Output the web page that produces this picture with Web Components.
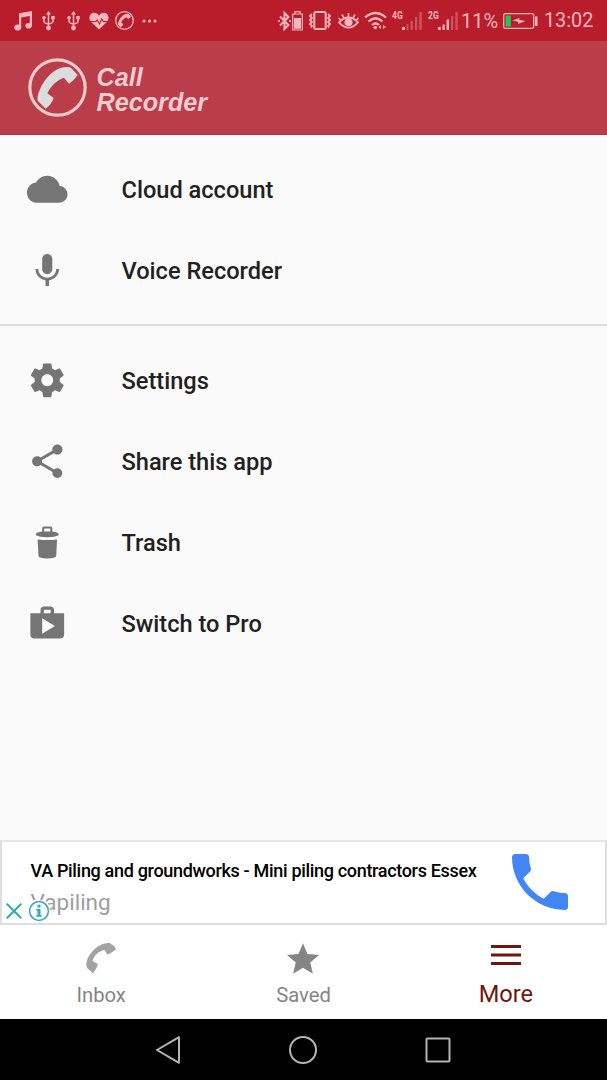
<!DOCTYPE html>
<html lang="en">
<head>
<meta charset="utf-8">
<meta name="viewport" content="width=device-width, initial-scale=1">
<title>Call Recorder</title>
<style>
  body {
    margin: 0;
    font-family: Roboto, "Liberation Sans", sans-serif;
    background: #fafafa;
  }
</style>
</head>
<body>
<call-recorder-app></call-recorder-app>

<script>
/* Icons: [viewBox, width, height, markup] */
const HANDSET = "M137 206 L113 182 C108 154 150 76 205 81 Q212 82 214 85 L233 105 Q222 122 207 131 L192 113 C172 119 152 138 142 160 L161 174 Q154 194 137 206Z";

const ICONS = {
  /* status bar, left */
  music: ["0 0 18 20", 18, 20, `<path d="M5 2.2 18 0v15.2h-2.200V5L7.200 6.500v10H5z"/><ellipse cx="3.7" cy="16.4" rx="3.5" ry="3"/><ellipse cx="14.6" cy="14.8" rx="3.2" ry="2.8"/>`],
  usb: ["0 0 13 20", 13, 20, `<path d="M6.5 2v15M2 7.500v2.800q0 1.400 1.400 1.800l3.100 1.200 3.100-1.200q1.400-.4 1.400-1.800V7" fill="none" stroke="currentColor" stroke-width="1.500"/><path d="M6.500 0 9 3.600H4z"/><circle cx="2" cy="6.800" r="1.800"/><path d="M9.300 5h3.400v3.300H9.300z"/><circle cx="6.500" cy="17" r="2.400"/>`],
  heart: ["0 0 20 18", 20, 18, `<path d="M10 17.500 1.700 9.500C-.8 6.500.5 1 5 .8c2.300 0 4 1.200 5 2.900C11 2 12.700.8 15 .8c4.500.2 5.800 5.700 3.300 8.700z"/><path d="M0 9.500h7l1.200-1.600 2.300 4 2.300-5 1.500 2.600H20" fill="none" stroke="#b91d2c" stroke-width="1.100"/>`],
  callCircle: ["84 54 177 177", 19, 19, `<circle cx="172.500" cy="142.500" r="82" fill="none" stroke="currentColor" stroke-width="12"/><path d="${HANDSET}"/>`],
  dots: ["0 0 15 4", 15, 4, `<circle cx="2" cy="2" r="1.500"/><circle cx="7.500" cy="2" r="1.500"/><circle cx="13" cy="2" r="1.500"/>`],

  /* status bar, right */
  bluetooth: ["0 0 13 20", 13, 20, `<path d="M2 5.500 10.500 14 6.500 18V2l4 4L2 14.500" fill="none" stroke="currentColor" stroke-width="2"/><circle cx="1" cy="10" r="1.100"/><circle cx="12" cy="10" r="1.100"/>`],
  deviceBattery: ["0 0 11 20", 11, 20, `<path d="M.7 3h9.600v16H.7zM3 3V.7h5V3" fill="none" stroke="currentColor" stroke-width="1.200"/><path d="M2 7h7v10.800H2z"/>`],
  vibrate: ["0 0 24 19", 24, 19, `<rect x="6.300" y="1" width="11.400" height="17" rx="1.500" fill="none" stroke="currentColor" stroke-width="2"/><path d="M4 3 2 5l2 2-2 2 2 2-2 2 2 2-1 1.500M20 3l2 2-2 2 2 2-2 2 2 2-2 2 1 1.500" fill="none" stroke="currentColor" stroke-width="1.800"/>`],
  eye: ["0 0 21 17", 21, 17, `<path d="M1 10.300q9.500-9.500 19 0-9.500 10.500-19 0z" fill="none" stroke="currentColor" stroke-width="1.800"/><circle cx="10.500" cy="10.300" r="4"/><path d="M10.500 1v4M4 2.500l2 3.500M17 2.500l-2 3.500M.5 6l2 2M20.500 6l-2 2" stroke="currentColor" stroke-width="1.600"/>`],
  wifi: ["0 0 24 20", 24, 20, `<g fill="none" stroke="currentColor" stroke-width="2.200"><path d="M1 6.500q10.500-9 21 0M4.500 10.500q7-6.500 14 0M8 14q3.500-3 7 0"/></g><circle cx="11.300" cy="16.500" r="1.800"/><path d="m14.500 16 2.500-2v4zM19 14v4l3-2z"/>`],
  signalOne: ["0 0 20 18", 20, 18, `<path d="M0 15h3v3H0z"/><g opacity=".35"><path d="M4.500 12h2v6h-2zM8.600 9h2.200v9H8.600zM13 5h2.200v13H13zM17.300 0h2.400v18h-2.400z"/></g>`],
  signalThree: ["0 0 20 18", 20, 18, `<path d="M0 15h2.700v3H0zM4.500 12.500h2.200V18H4.500zM8.600 7.500h2.400V18H8.600z"/><g opacity=".35"><path d="M13 4h2.200v14H13zM17.300 0h2.400v18h-2.400z"/></g>`],
  battery: ["0 0 36 16", 36, 16, `<rect x=".7" y=".7" width="30" height="14.600" rx="1.500" fill="none" stroke="currentColor" stroke-width="1.300"/><path d="M2.600 2.500h5.200v11H2.600z" fill="#1ec95a"/><path d="m9.500 7.500 7-2.500-.3 2 6.300 1-7.500 3 .3-2.300z"/><path d="M32 3.500h2.500v9.500H32z"/>`],

  /* app */
  logo: ["84 54 177 177", 59, 59, `<circle cx="172.500" cy="142.500" r="83" fill="none" stroke="#f0c9cd" stroke-width="9.500"/><path fill="#dcdcde" d="${HANDSET}"/>`],
  cloud: ["0 0 24 24", 40.5, 40.5, `<path d="M19.350 10.040C18.670 6.590 15.640 4 12 4 9.110 4 6.600 5.640 5.350 8.040 2.340 8.360 0 10.910 0 14c0 3.310 2.690 6 6 6h13c2.760 0 5-2.240 5-5 0-2.640-2.050-4.780-4.650-4.960z"/>`],
  mic: ["0 -0.300 24 24", 40.5, 40.5, `<path d="M12 14c1.660 0 2.990-1.340 2.990-3L15 5c0-1.660-1.340-3-3-3S9 3.340 9 5v6c0 1.660 1.340 3 3 3zm5.300-3c0 3-2.540 5.100-5.300 5.100S6.700 14 6.700 11H5c0 3.410 2.720 6.230 6 6.720V21h2v-3.280c3.280-.48 6-3.300 6-6.720h-1.700z"/>`],
  settings: ["0 0 24 24", 40.5, 40.5, `<path d="M19.430 12.980c.04-.32.07-.64.07-.98s-.03-.66-.07-.98l2.110-1.650c.19-.15.24-.42.12-.64l-2-3.460c-.12-.22-.39-.3-.61-.22l-2.490 1c-.52-.4-1.080-.73-1.690-.98l-.38-2.650C14.460 2.180 14.250 2 14 2h-4c-.25 0-.46.18-.49.42l-.38 2.650c-.61.25-1.170.59-1.690.98l-2.490-1c-.23-.09-.49 0-.61.22l-2 3.460c-.13.22-.07.49.12.64l2.110 1.650c-.04.32-.07.65-.07.98s.03.66.07.98l-2.110 1.650c-.19.15-.24.42-.12.64l2 3.460c.12.22.39.3.61.22l2.490-1c.52.4 1.080.73 1.690.98l.38 2.650c.03.24.24.42.49.42h4c.25 0 .46-.18.49-.42l.38-2.650c.61-.25 1.170-.59 1.690-.98l2.490 1c.23.09.49 0 .61-.22l2-3.460c.12-.22.07-.49-.12-.64l-2.110-1.650zM12 15.500c-1.930 0-3.500-1.570-3.500-3.500s1.570-3.500 3.500-3.500 3.500 1.570 3.500 3.500-1.570 3.500-3.500 3.500z"/>`],
  share: ["0 0 24 24", 40.5, 40.5, `<path d="M18 16.080c-.76 0-1.440.3-1.960.77L8.910 12.700c.05-.23.09-.46.09-.7s-.04-.47-.09-.7l7.050-4.110c.54.5 1.250.81 2.040.81 1.660 0 3-1.340 3-3s-1.340-3-3-3-3 1.340-3 3c0 .24.04.47.09.7L8.040 9.810C7.500 9.310 6.790 9 6 9c-1.660 0-3 1.340-3 3s1.340 3 3 3c.79 0 1.500-.31 2.040-.81l7.120 4.160c-.05.21-.08.43-.08.65 0 1.610 1.310 2.920 2.920 2.920 1.610 0 2.920-1.310 2.920-2.920s-1.310-2.920-2.920-2.920z"/>`],
  trash: ["0 -1 24 24", 40.5, 40.5, `<path d="M9.600 5V2.500q0-.5.500-.5h3.800q.5 0 .5.500V5" fill="none" stroke="currentColor" stroke-width="1.200" transform="translate(0 .2)"/><path d="M5.300 6.900V6.100Q5.300 5.100 9 4.600h6q3.700.5 3.700 1.500v.8q-2 1.100-6.700 1.100t-6.700-1.100zM6.300 9.300q5.700.8 11.500 0l-.5 9.800q-.2 1.400-5.250 1.500-5.050-.1-5.250-1.500z"/>`],
  shop: ["0 0 24 24", 40.5, 40.5, `<path d="M16 6V4c0-1.110-.89-2-2-2h-4c-1.110 0-2 .89-2 2v2H2v13c0 1.110.89 2 2 2h16c1.110 0 2-.89 2-2V6h-6zm-6-2h4v2h-4V4zM9 18.200V9l7.500 4.600z"/>`],
  call: ["3 3 18 18", 56, 56, `<path d="M6.620 10.790c1.440 2.830 3.760 5.140 6.590 6.590l2.200-2.200c.27-.27.67-.36 1.020-.24 1.120.37 2.330.57 3.570.57.55 0 1 .45 1 1V20c0 .55-.45 1-1 1-9.390 0-17-7.610-17-17 0-.55.45-1 1-1h3.500c.55 0 1 .45 1 1 0 1.250.2 2.450.57 3.570.11.35.03.74-.25 1.020l-2.200 2.200z"/>`],
  close: ["0 0 16 16", 16, 16, `<path d="m.8.800 14.400 14.400M15.200.8.800 15.200" fill="none" stroke="currentColor" stroke-width="2"/>`],
  info: ["0 0 22 22", 22, 22, `<circle cx="11" cy="11" r="9.400" fill="none" stroke="currentColor" stroke-width="1.500"/><path d="M9.500 4.800h3v2.600h-3zM8.200 9h4.300v6.200h1.300v1.500H8.200v-1.500h1.300v-4.700H8.200z"/>`],
  inbox: ["255 66 96 96", 32, 32, `<path d="M279 160 L262 145 C248 118 290 66 329 69 Q342 75 348 87 Q336 99 323 104 L313 90 C296 93 281 108 278 123 L294 132 Q289 149 279 160Z"/>`],
  star: ["2 2 20 19", 32, 31, `<path d="M12 17.270 18.180 21l-1.640-7.030L22 9.240l-7.190-.61L12 2 9.190 8.630 2 9.240l5.460 4.730L5.820 21z"/>`],
  menu: ["0 0 30 20", 30, 20, `<path d="M0 0h30v3H0zM0 8.500h30v3H0zM0 17h30v3H0z"/>`],

  /* system buttons */
  back: ["0 0 26 30", 26, 30, `<path d="M24 2.200v25.600L2 15z" fill="none" stroke="currentColor" stroke-width="2" stroke-linejoin="round"/>`],
  home: ["0 0 30 30", 30, 30, `<circle cx="15" cy="15" r="13" fill="none" stroke="currentColor" stroke-width="2"/>`],
  recents: ["0 0 26 26", 26, 26, `<rect x="1.500" y="1.500" width="23" height="23" rx="1" fill="none" stroke="currentColor" stroke-width="2"/>`]
};

class UiIcon extends HTMLElement {
  constructor() {
    super();
    const shadow = this.attachShadow({ mode: "open" });
    const [box, width, height, markup] = ICONS[this.getAttribute("name")];
    shadow.innerHTML = `
      <style>
        :host { display: block; flex: none; line-height: 0; }
        svg { display: block; fill: currentColor; overflow: visible; }
      </style>
      <svg viewBox="${box}" width="${width}" height="${height}" aria-hidden="true">${markup}</svg>
    `;
  }
}

class StatusBar extends HTMLElement {
  constructor() {
    super();
    const shadow = this.attachShadow({ mode: "open" });
    shadow.innerHTML = `
      <style>
        :host {
          display: flex;
          justify-content: space-between;
          box-sizing: border-box;
          height: 41px;
          padding: 0 14px 0 14px;
          background: #b91d2c;
          color: #f7b5bc;
        }
        .group { display: flex; align-items: center; height: 41px; }
        .notifications { gap: 10px; }
        .notifications ui-icon:nth-child(2) { margin-right: 2px; }
        .notifications ui-icon:nth-child(4) { margin-left: -1px; margin-right: -4px; }
        .notifications ui-icon:last-child { margin-left: -2px; }
        .net {
          align-self: flex-start;
          margin-top: 10px;
          width: 11px;
          font: 700 10px/11px "Roboto", sans-serif;
          transform: scaleX(.85);
          transform-origin: left;
        }
        .percent { margin-left: 3px; width: 38px; font-size: 20px; line-height: 24px; }
        .clock { margin-left: 5px; width: 49px; font-size: 19.800px; line-height: 24px; white-space: nowrap; padding-top: 1px; }
      </style>
      <div class="group notifications">
        <ui-icon name="music"></ui-icon>
        <ui-icon name="usb"></ui-icon>
        <ui-icon name="usb"></ui-icon>
        <ui-icon name="heart"></ui-icon>
        <ui-icon name="callCircle"></ui-icon>
        <ui-icon name="dots"></ui-icon>
      </div>
      <div class="group">
        <ui-icon name="bluetooth"></ui-icon>
        <ui-icon name="deviceBattery" style="margin-left:1px"></ui-icon>
        <ui-icon name="vibrate" style="margin-left:5px"></ui-icon>
        <ui-icon name="eye" style="margin-left:6px"></ui-icon>
        <ui-icon name="wifi" style="margin-left:5px"></ui-icon>
        <span class="net" style="margin-left:4px">4G</span>
        <ui-icon name="signalOne" style="margin-left:-1px"></ui-icon>
        <span class="net" style="margin-left:6px">2G</span>
        <ui-icon name="signalThree" style="margin-left:-1px"></ui-icon>
        <span class="percent">11%</span>
        <ui-icon name="battery" style="margin-left:4px"></ui-icon>
        <span class="clock">13:02</span>
      </div>
    `;
  }
}

class AppHeader extends HTMLElement {
  constructor() {
    super();
    const shadow = this.attachShadow({ mode: "open" });
    shadow.innerHTML = `
      <style>
        :host {
          display: flex;
          align-items: center;
          gap: 9.500px;
          box-sizing: border-box;
          height: 94px;
          padding-left: 28px;
          background: #b93e49;
          border-bottom: 1px solid #b43540;
        }
        h1 {
          margin: 5px 0 0;
          font: italic 700 25.200px/25px "Liberation Sans", sans-serif;
          color: #f0cbd0;
        }
      </style>
      <ui-icon name="logo"></ui-icon>
      <h1>Call<br>Recorder</h1>
    `;
  }
}

class MenuGroup extends HTMLElement {
  constructor() {
    super();
    const shadow = this.attachShadow({ mode: "open" });
    shadow.innerHTML = `
      <style>
        :host { display: block; padding: 14px 0 12.500px; }
        :host([divided]) { border-bottom: 2px solid #dcdcdc; }
      </style>
      <slot></slot>
    `;
  }
}

class MenuItem extends HTMLElement {
  constructor() {
    super();
    const shadow = this.attachShadow({ mode: "open" });
    shadow.innerHTML = `
      <style>
        :host {
          display: flex;
          align-items: center;
          gap: 54px;
          height: 81px;
          padding-left: 27px;
          color: #212121;
          font-size: 23.600px;
          font-weight: 500;
        }
        ui-icon { color: #757575; }
        span { padding-top: 1px; }
      </style>
      <ui-icon name="${this.getAttribute("icon")}"></ui-icon>
      <span><slot></slot></span>
    `;
  }
}

class AdBanner extends HTMLElement {
  constructor() {
    super();
    const shadow = this.attachShadow({ mode: "open" });
    shadow.innerHTML = `
      <style>
        :host {
          position: relative;
          display: flex;
          justify-content: space-between;
          box-sizing: border-box;
          height: 85px;
          padding: 12px 37px 0 28.500px;
          background: #fff;
          border: 2px solid #dedede;
          border-top-color: #e6e6e6;
        }
        .title {
          margin-top: 6px;
          font-size: 18px;
          line-height: 22px;
          font-weight: 500;
          letter-spacing: -.32px;
          color: #000;
          white-space: nowrap;
        }
        .site {
          margin-top: 7px;
          font-size: 22.500px;
          line-height: 27px;
          color: #9e9e9e;
        }
        .call { color: #4285f4; }
        .choices {
          position: absolute;
          left: 4px;
          bottom: 1px;
          display: flex;
          align-items: center;
          gap: 6px;
          color: #2fa9bd;
        }
        /* the info badge hides the start of the site name */
        .choices ui-icon:last-child {
          background: #fff;
          border-radius: 3px 9px 9px 3px;
        }
      </style>
      <div>
        <div class="title"><slot name="title"></slot></div>
        <div class="site"><slot name="site"></slot></div>
      </div>
      <ui-icon class="call" name="call"></ui-icon>
      <div class="choices">
        <ui-icon name="close"></ui-icon>
        <ui-icon name="info"></ui-icon>
      </div>
    `;
  }
}

class NavTab extends HTMLElement {
  constructor() {
    super();
    const shadow = this.attachShadow({ mode: "open" });
    shadow.innerHTML = `
      <style>
        :host {
          flex: 1;
          display: flex;
          flex-direction: column;
          align-items: center;
          color: #858585;
          font-size: 20.250px;
        }
        .icon { display: flex; align-items: center; height: 32px; margin-top: 17px; }
        .label { margin-top: 8px; line-height: 26px; }
        :host([icon="inbox"]) .icon { color: #a3a3a3; }
        :host([active]) { color: #74140f; font-size: 23.600px; }
        :host([active]) .icon { margin-top: 14px; }
        :host([active]) .label { margin-top: 10px; }
      </style>
      <div class="icon"><ui-icon name="${this.getAttribute("icon")}"></ui-icon></div>
      <span class="label"><slot></slot></span>
    `;
  }
}

class BottomNav extends HTMLElement {
  constructor() {
    super();
    const shadow = this.attachShadow({ mode: "open" });
    shadow.innerHTML = `
      <style>
        :host { display: flex; height: 94px; background: #fff; }
      </style>
      <slot></slot>
    `;
  }
}

class SystemNav extends HTMLElement {
  constructor() {
    super();
    const shadow = this.attachShadow({ mode: "open" });
    shadow.innerHTML = `
      <style>
        :host {
          display: grid;
          grid-template-columns: repeat(3, 135px);
          justify-content: center;
          justify-items: center;
          align-items: center;
          box-sizing: border-box;
          height: 61px;
          padding-right: 1px;
          background: #000;
          color: #b4b4b4;
        }
      </style>
      <ui-icon name="back"></ui-icon>
      <ui-icon name="home"></ui-icon>
      <ui-icon name="recents"></ui-icon>
    `;
  }
}

class CallRecorderApp extends HTMLElement {
  constructor() {
    super();
    const shadow = this.attachShadow({ mode: "open" });
    shadow.innerHTML = `
      <style>
        :host {
          display: flex;
          flex-direction: column;
          height: 1080px;
          overflow: hidden;
        }
        main { flex: 1; }
      </style>
      <status-bar></status-bar>
      <app-header></app-header>
      <main>
        <menu-group divided>
          <menu-item icon="cloud">Cloud account</menu-item>
          <menu-item icon="mic">Voice Recorder</menu-item>
        </menu-group>
        <menu-group>
          <menu-item icon="settings">Settings</menu-item>
          <menu-item icon="share">Share this app</menu-item>
          <menu-item icon="trash">Trash</menu-item>
          <menu-item icon="shop">Switch to Pro</menu-item>
        </menu-group>
      </main>
      <ad-banner>
        <span slot="title">VA Piling and groundworks - Mini piling contractors Essex</span>
        <span slot="site">Vapiling</span>
      </ad-banner>
      <bottom-nav>
        <nav-tab icon="inbox">Inbox</nav-tab>
        <nav-tab icon="star">Saved</nav-tab>
        <nav-tab icon="menu" active>More</nav-tab>
      </bottom-nav>
      <system-nav></system-nav>
    `;
  }
}

customElements.define("ui-icon", UiIcon);
customElements.define("status-bar", StatusBar);
customElements.define("app-header", AppHeader);
customElements.define("menu-group", MenuGroup);
customElements.define("menu-item", MenuItem);
customElements.define("ad-banner", AdBanner);
customElements.define("nav-tab", NavTab);
customElements.define("bottom-nav", BottomNav);
customElements.define("system-nav", SystemNav);
customElements.define("call-recorder-app", CallRecorderApp);
</script>
</body>
</html>
